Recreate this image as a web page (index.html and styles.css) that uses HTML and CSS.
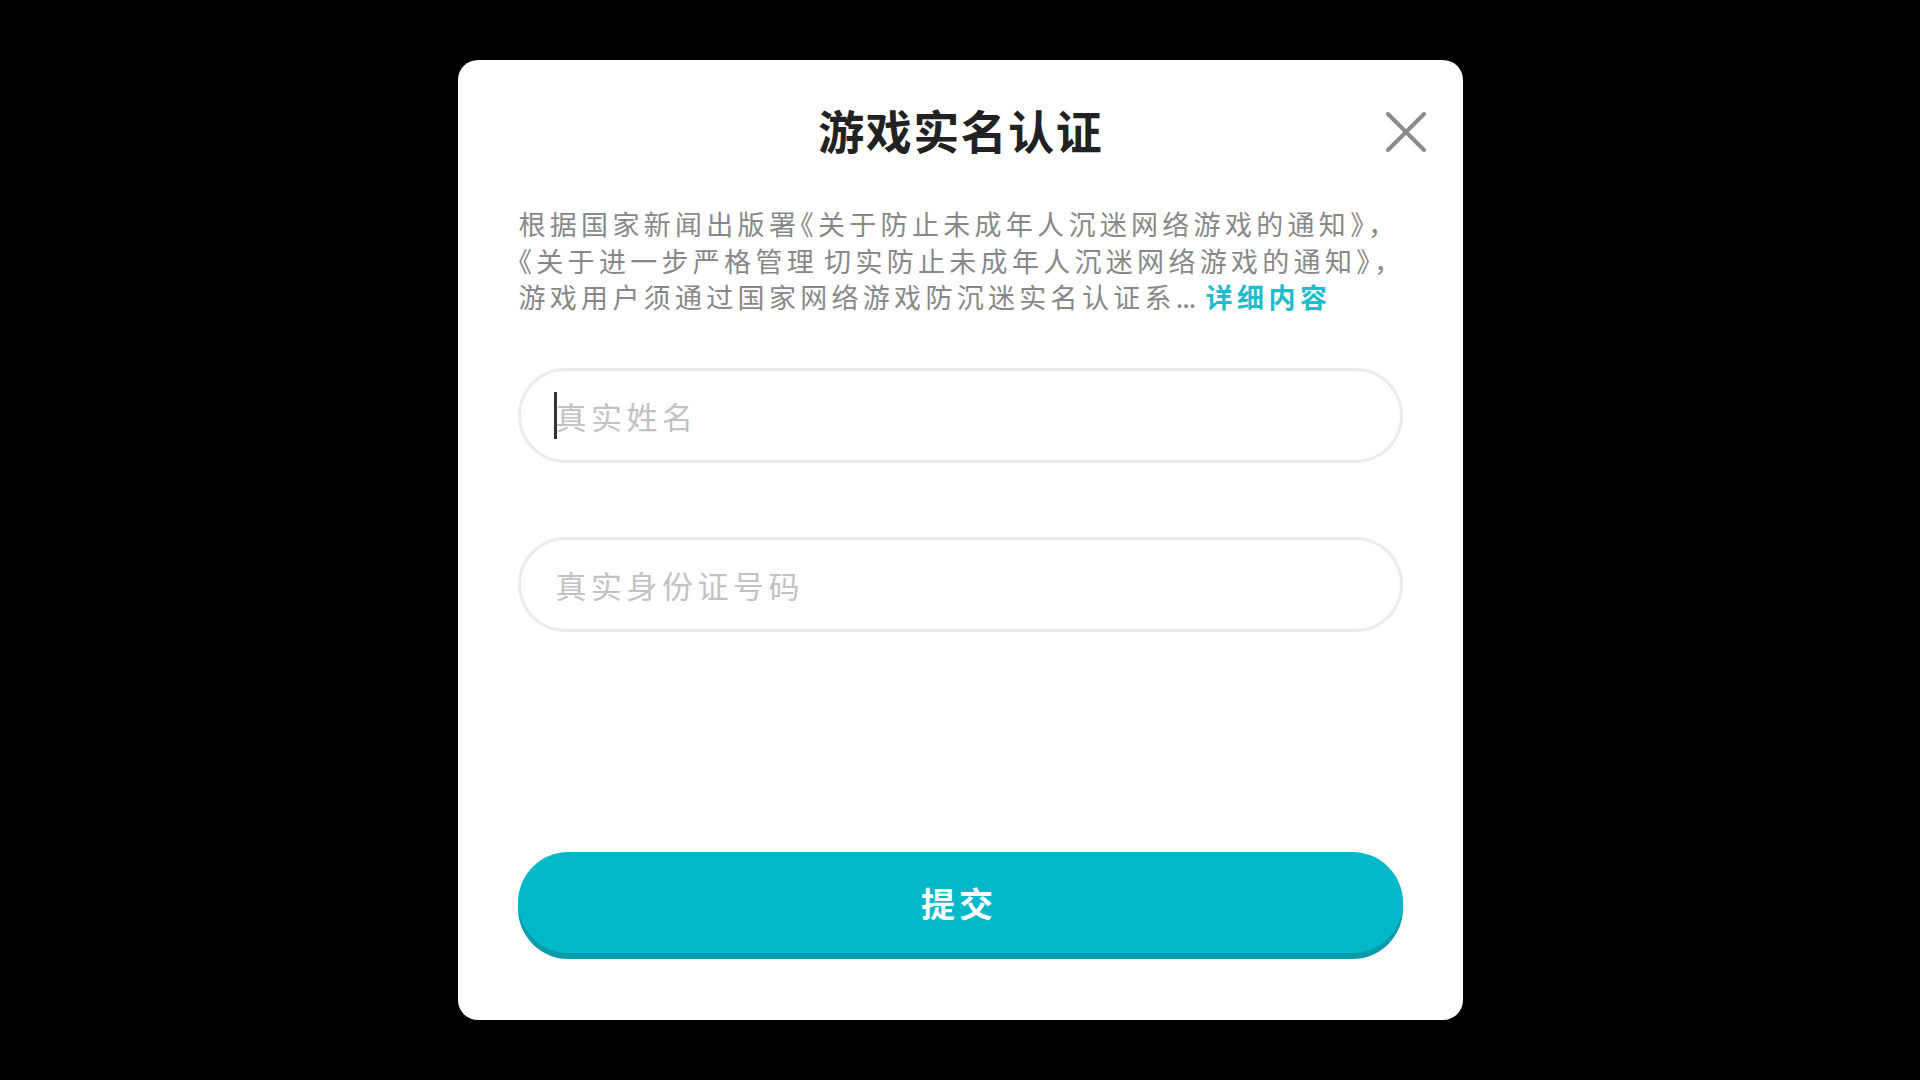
FILE: index.html
```html
<!DOCTYPE html>
<html lang="zh-CN">
<head>
<meta charset="utf-8">
<title>游戏实名认证</title>
<link rel="stylesheet" href="styles.css">
</head>
<body>
<div class="overlay">
  <div class="modal">
    <div class="modal-header">
      <h1 class="modal-title">游戏实名认证</h1>
      <button class="close-btn" aria-label="关闭">
        <svg viewBox="0 0 40 40" width="40" height="40">
          <path d="M2 2 L38 38 M38 2 L2 38" stroke="#8c8c8c" stroke-width="4" stroke-linecap="round" fill="none"/>
        </svg>
      </button>
    </div>
    <p class="notice">根据国家新闻出版署<span class="p">《</span>关于防止未成年人沉迷网络游戏的通知<span class="p">》，</span><br><span class="p">《</span>关于进一步严格管理<span class="sp"> </span>切实防止未成年人沉迷网络游戏的通知<span class="p">》，</span><br>游戏用户须通过国家网络游戏防沉迷实名认证系<span class="ellipsis">...</span><span class="gap"> </span><a class="more" href="#">详细内容</a></p>
    <div class="field first">
      <input class="text-input" type="text" placeholder="真实姓名">
      <span class="caret"></span>
    </div>
    <div class="field second">
      <input class="text-input" type="text" placeholder="真实身份证号码">
    </div>
    <button class="submit-btn">提交</button>
  </div>
</div>
</body>
</html>
```

FILE: styles.css
```css
html, body {
  margin: 0;
  padding: 0;
  background: #000;
}

body {
  font-family: "Noto Sans CJK SC", "Noto Sans", sans-serif;
}

.overlay {
  width: 100vw;
  height: 100vh;
  display: flex;
  align-items: center;
  justify-content: center;
}

.modal {
  position: relative;
  box-sizing: border-box;
  width: 1005px;
  height: 960px;
  background: #fff;
  border-radius: 20px;
  padding: 38px 60px 67px 60px;
  display: flex;
  flex-direction: column;
}

.modal-header {
  height: 62px;
  display: flex;
  align-items: center;
  justify-content: center;
}

.modal-title {
  margin: 0;
  font-size: 46px;
  line-height: 1;
  font-weight: 700;
  color: #222;
  letter-spacing: 1.5px;
  padding-left: 1.5px;
}

.close-btn {
  position: absolute;
  top: 52px;
  right: 37px;
  width: 40px;
  height: 40px;
  padding: 0;
  border: none;
  background: transparent;
  cursor: pointer;
}

.close-btn svg {
  display: block;
}

.notice {
  margin: 46px 0 0 1px;
  font-size: 27px;
  line-height: 36.5px;
  letter-spacing: 4.3px;
  color: #888;
  white-space: nowrap;
}

.notice .p {
  font-feature-settings: "halt";
}

.notice .sp {
  letter-spacing: 0;
}

.notice .gap {
  letter-spacing: 4px;
}

.notice .ellipsis {
  letter-spacing: -1px;
}

.notice .more {
  color: #1fbccc;
  font-weight: 700;
  text-decoration: none;
  letter-spacing: 4.5px;
}

.field {
  position: relative;
}

.field.first {
  margin-top: 52px;
}

.field.second {
  margin-top: 74px;
}

.text-input {
  display: block;
  box-sizing: border-box;
  width: 100%;
  height: 95px;
  border: 3px solid #ebebeb;
  border-radius: 48px;
  padding: 0 35px;
  font-family: "Noto Sans CJK SC", sans-serif;
  font-size: 31px;
  letter-spacing: 4.5px;
  color: #333;
  background: #fff;
  outline: none;
}

.text-input::placeholder {
  color: #c2c2c2;
}

.caret {
  position: absolute;
  left: 36px;
  top: 24px;
  width: 3px;
  height: 47px;
  background: #333;
}

.submit-btn {
  margin-top: auto;
  width: 100%;
  height: 101px;
  border: none;
  border-radius: 51px;
  background: #03b8c9;
  box-shadow: 0 6px 0 #0a9bab;
  color: #fff;
  font-family: "Noto Sans CJK SC", sans-serif;
  font-size: 34px;
  font-weight: 700;
  letter-spacing: 4px;
  padding-left: 4px;
  cursor: pointer;
}
```
